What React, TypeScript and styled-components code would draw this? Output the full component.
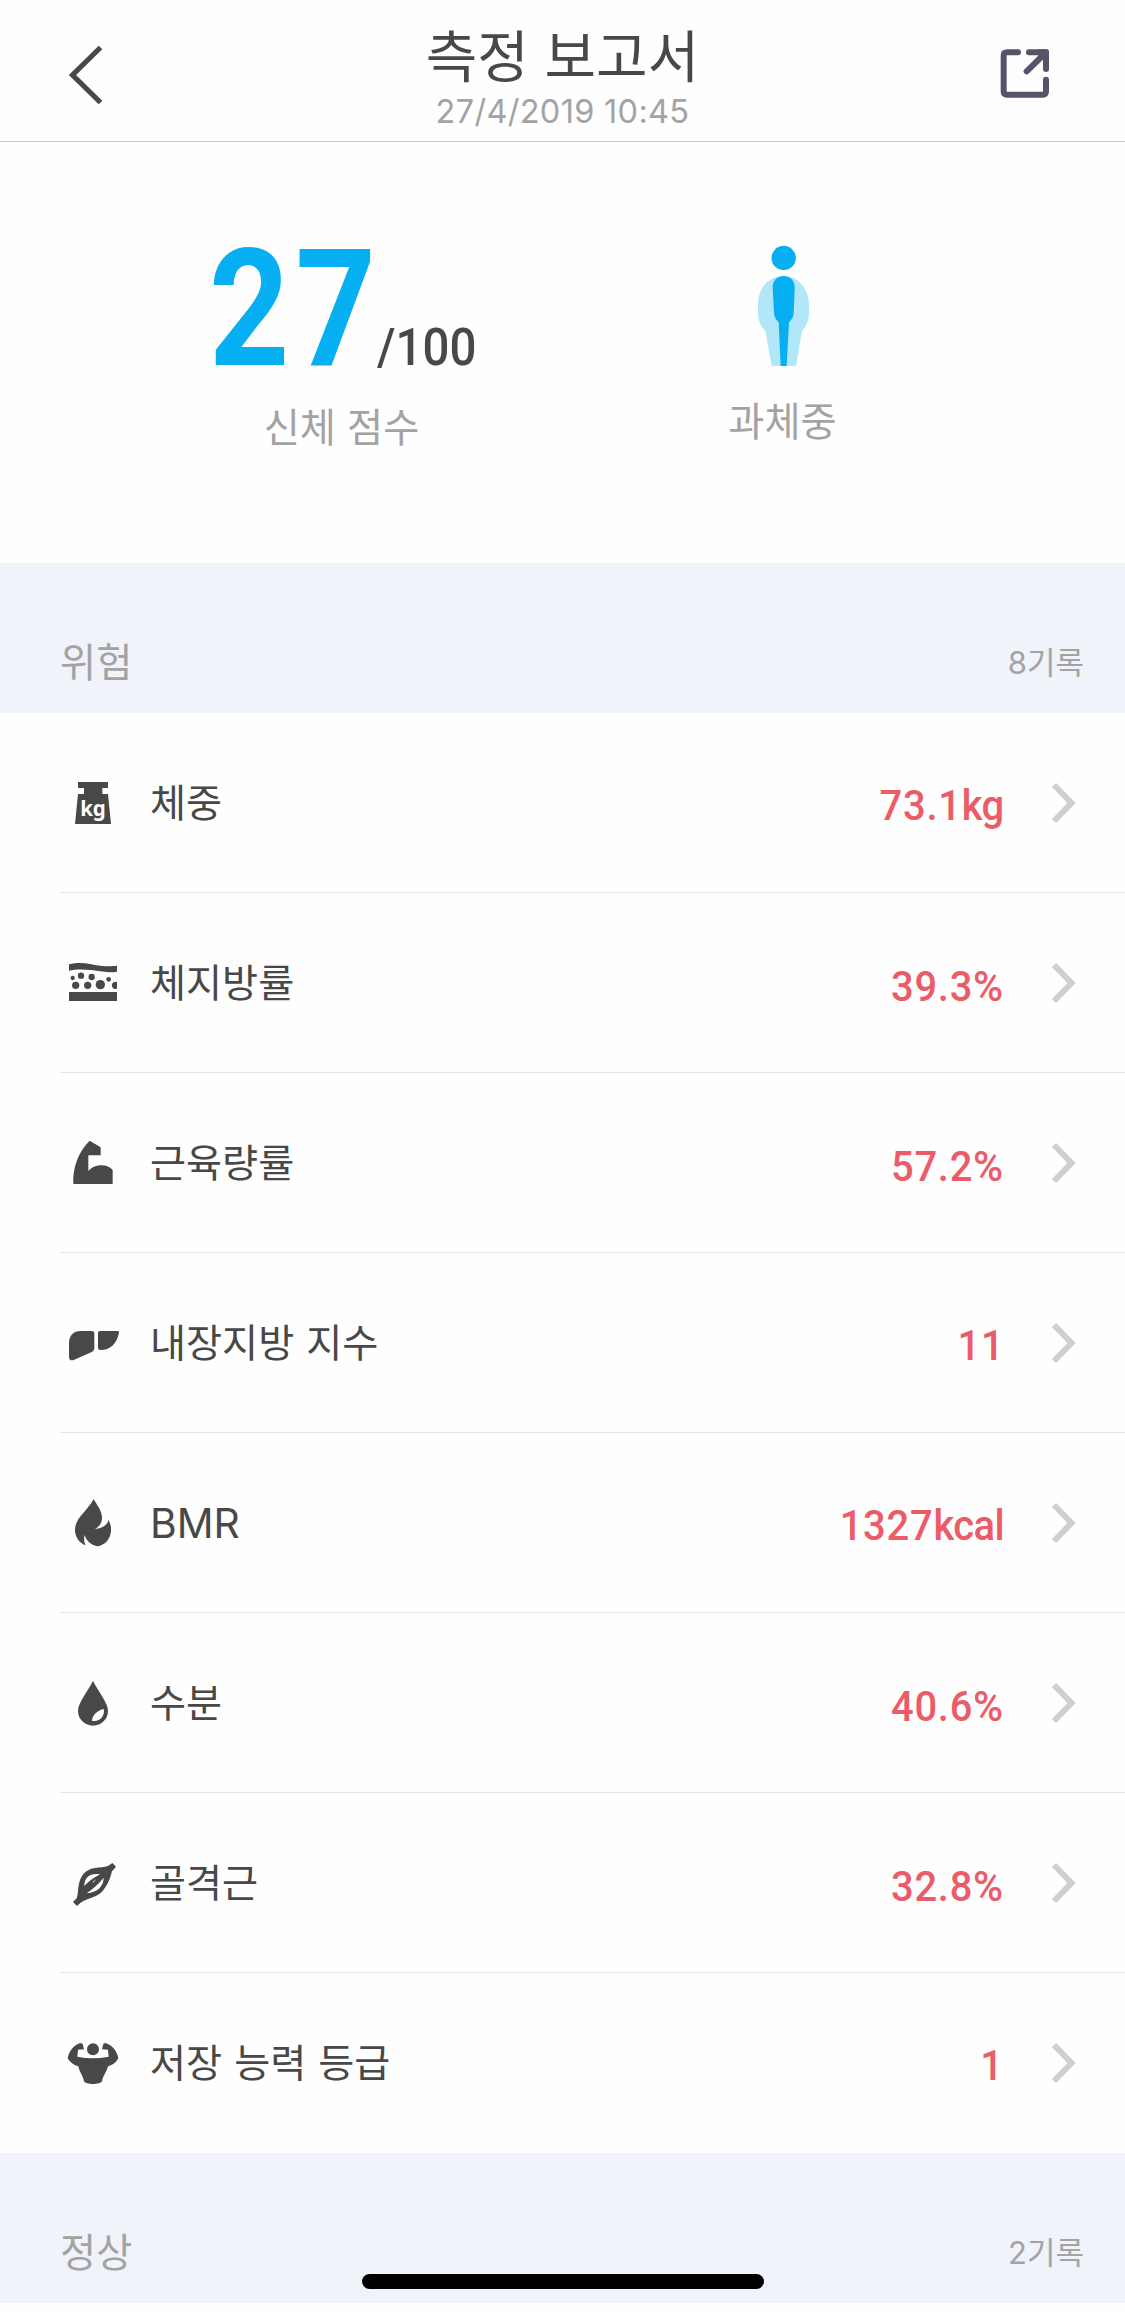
import React from "react";
import styled, { createGlobalStyle } from "styled-components";

const INK = "#484848";
const MUTED = "#a3a3a3";
const BLUE = "#06aff2";
const RED = "#eb5c68";

const GlobalStyle = createGlobalStyle`
  *, *::before, *::after { box-sizing: border-box; }
  body {
    margin: 0;
    background: #fefefe;
    color: ${INK};
    font-family: Inter, "Noto Sans CJK KR", sans-serif;
    -webkit-font-smoothing: antialiased;
  }
`;

const Screen = styled.div`
  position: relative;
  display: flex;
  flex-direction: column;
  width: 1125px;
  height: 2312px;
  overflow: hidden;
  background: #fefefe;
`;

const Header = styled.header`
  display: grid;
  grid-template-columns: 140px 1fr 140px;
  flex: none;
  height: 142px;
  border-bottom: 1px solid #c8c8c8;
`;

const HeaderButton = styled.button<{ $end?: boolean }>`
  display: flex;
  align-items: flex-start;
  justify-content: ${(p) => (p.$end ? "flex-end" : "flex-start")};
  padding: ${(p) => (p.$end ? "35px 60px 0 0" : "35px 0 0 60px")};
  border: 0;
  background: none;
`;

const Heading = styled.div`
  display: flex;
  flex-direction: column;
  align-items: center;
  padding-top: 17px;
`;

const Title = styled.h1`
  margin: 0;
  font-size: 56px;
  font-weight: 400;
  line-height: 80px;
  white-space: nowrap;
`;

const Timestamp = styled.time`
  color: ${MUTED};
  font-size: 32.5px;
  line-height: 30px;
  letter-spacing: 0.3px;
  white-space: nowrap;
`;

const Summary = styled.section`
  display: grid;
  grid-template-columns: 441px 441px;
  flex: none;
  height: 421px;
  padding-left: 121px;
`;

const SummaryItem = styled.div<{ $top: number; $gap: number }>`
  display: flex;
  flex-direction: column;
  align-items: center;
  gap: ${(p) => p.$gap}px;
  padding-top: ${(p) => p.$top}px;
`;

const Score = styled.div`
  display: flex;
  align-items: baseline;
  height: 143px;
  font-family: Roboto, sans-serif;
  line-height: 166px;
  white-space: nowrap;
`;

const ScoreValue = styled.span`
  margin-right: -33px;
  color: ${BLUE};
  font-size: 163px;
  font-weight: 700;
  letter-spacing: 7px;
  transform: scaleX(0.86);
  transform-origin: left center;
`;

const ScoreTotal = styled.span`
  margin-right: -10px;
  font-size: 51px;
  font-weight: 500;
  transform: scaleX(0.93);
  transform-origin: left center;
`;

const SummaryLabel = styled.div`
  color: ${MUTED};
  font-size: 39.3px;
  line-height: 60px;
  white-space: nowrap;
`;

const SectionBar = styled.div`
  display: flex;
  align-items: center;
  justify-content: space-between;
  flex: none;
  height: 150px;
  padding: 43px 41px 0 60px;
  background: #f0f3fa;
  color: ${MUTED};
  white-space: nowrap;
`;

const SectionName = styled.h2`
  margin: 0;
  font-size: 39.3px;
  font-weight: 400;
`;

const SectionCount = styled.span`
  padding-top: 2px;
  font-size: 31px;
`;

const List = styled.ul`
  flex: none;
  margin: 0;
  padding: 0 0 0 60px;
  list-style: none;
`;

const Row = styled.li`
  display: flex;
  align-items: center;
  height: 180px;
  padding: 0 48px 0 6px;
  border-bottom: 1px solid #e4e4e4;

  &:last-child {
    border-bottom-color: transparent;
  }
`;

const RowIcon = styled.svg`
  flex: none;
  width: 54px;
  height: 54px;
  fill: ${INK};
`;

const RowLabel = styled.span<{ $latin: boolean }>`
  flex: 1;
  padding: ${(p) => (p.$latin ? "0 0 0 30px" : "1px 0 0 30px")};
  font-size: ${(p) => (p.$latin ? 40.8 : 39.2)}px;
  line-height: 60px;
  white-space: nowrap;
  word-spacing: 1px;
`;

const RowValue = styled.span`
  margin-right: 45px;
  padding-top: 7px;
  color: ${RED};
  font-family: Roboto, sans-serif;
  font-size: 42px;
  font-weight: 500;
  letter-spacing: 0.8px;
  line-height: 60px;
  white-space: nowrap;
  transform: scaleX(0.95);
  transform-origin: right center;
`;

const Unit = styled.span<{ $symbol: boolean }>`
  font-size: ${(p) => (p.$symbol ? 43 : 42)}px;
  letter-spacing: ${(p) => (p.$symbol ? 0.8 : -0.6)}px;
`;

const HomeIndicator = styled.div`
  position: absolute;
  bottom: 23px;
  left: 362px;
  width: 402px;
  height: 15px;
  border-radius: 8px;
  background: #000;
`;

const WeightIcon = () => (
  <RowIcon viewBox="78 108 162 162">
    <path d="M114 126H204V144H187V162H204L213 252H105L114 162H132V144H114Z" />
    <text x="159" y="228" textAnchor="middle" fill="#fff" fontFamily="'Noto Sans', sans-serif" fontWeight="700" fontSize="66" textLength="77" lengthAdjust="spacingAndGlyphs">
      kg
    </text>
  </RowIcon>
);

const FatIcon = () => (
  <RowIcon viewBox="78 648 162 162">
    <path d="M87 673C125 663 150 673 180 677C205 680 219 678 231 677V695C205 700 190 695 160 691C130 687 105 688 87 692Z" />
    <circle cx="98" cy="714" r="6.5" />
    <circle cx="123" cy="707" r="9.5" />
    <circle cx="155" cy="711" r="9.5" />
    <circle cx="206" cy="718" r="7" />
    <circle cx="107" cy="736" r="11" />
    <circle cx="143" cy="736" r="11" />
    <circle cx="181" cy="734" r="14" />
    <path d="M231 726A11 11 0 1 0 231 746Z" />
    <rect x="87" y="756" width="144" height="27" />
  </RowIcon>
);

const MuscleIcon = () => (
  <RowIcon viewBox="78 108 162 162">
    <path d="M149 122L182 142V166H145V213C157 200 170 196 184 196C199 196 211 202 218 210V252H100C97 204 116 153 149 122Z" />
  </RowIcon>
);

const LiverIcon = () => (
  <RowIcon viewBox="78 648 162 162">
    <path d="M122 693H155Q163 693 163 701V745Q163 751 157 755L101 780Q87 784 87 770V728C87 707 101 693 122 693Z" />
    <path d="M179 693H234Q238 694 237 699C229 733 211 750 181 750Q174 750 174 744V698Q174 693 179 693Z" />
  </RowIcon>
);

const FlameIcon = () => (
  <RowIcon viewBox="78 108 162 162">
    <path d="M161 117C169 133 187 151 186 176C185 190 177 201 165 207C185 205 201 197 206 180C212 193 214 203 213 213C211 239 194 255 173 259C154 255 139 244 134 225C131 236 132 245 137 256C117 248 105 230 105 209C105 174 144 151 161 117Z" />
  </RowIcon>
);

const DropIcon = () => (
  <RowIcon viewBox="78 648 162 162">
    <path fillRule="evenodd" d="M159 662C172 691 204 727 204 752A45 45 0 0 1 114 752C114 727 146 691 159 662ZM191 747C174 750 157 765 156 782C177 787 196 769 191 747Z" />
  </RowIcon>
);

const FibreIcon = () => (
  <RowIcon viewBox="78 108 162 162">
    <path fillRule="evenodd" d="M217 129L228 140L216 154C211 174 203 197 186 215C165 235 145 232 122 248L111 258L99 246L110 235C117 219 110 187 130 162C151 137 180 146 205 137ZM133 198C145 184 160 174 180 163C151 159 133 171 133 198ZM191 173C177 190 160 206 140 220C171 216 190 202 191 173Z" />
    <path d="M158 188L166 180" stroke="#fefefe" strokeWidth="2.5" />
  </RowIcon>
);

const BodybuilderIcon = () => (
  <RowIcon viewBox="78 648 162 162">
    <circle cx="159" cy="688" r="18" />
    <path d="M121 669L128 672L132 688L114 689L112 710Q159 719 206 710L204 689L186 688L190 671L196 669C218 675 231 694 235 715C227 729 216 737 204 739C200 757 189 766 186 784C179 795 139 795 132 784C129 766 118 757 115 739C102 737 91 728 83 715C87 694 100 675 121 669Z" />
  </RowIcon>
);

const Chevron = () => (
  <svg width="28" height="42" viewBox="0 0 28 42" fill="none">
    <path d="M5 3L22.5 21L5 39" stroke="#cfcfcf" strokeWidth="6" />
  </svg>
);

interface Measurement {
  label: string;
  value: string;
  unit?: string;
  Icon: React.FC;
  latin?: boolean;
}

const measurements: Measurement[] = [
  { label: "체중", value: "73.1", unit: "kg", Icon: WeightIcon },
  { label: "체지방률", value: "39.3", unit: "%", Icon: FatIcon },
  { label: "근육량률", value: "57.2", unit: "%", Icon: MuscleIcon },
  { label: "내장지방 지수", value: "11", Icon: LiverIcon },
  { label: "BMR", value: "1327", unit: "kcal", Icon: FlameIcon, latin: true },
  { label: "수분", value: "40.6", unit: "%", Icon: DropIcon },
  { label: "골격근", value: "32.8", unit: "%", Icon: FibreIcon },
  { label: "저장 능력 등급", value: "1", Icon: BodybuilderIcon },
];

export default function App() {
  return (
    <Screen lang="ko">
      <GlobalStyle />
      <Header>
        <HeaderButton>
          <svg width="50" height="80" viewBox="0 0 50 80" fill="none">
            <path d="M40.5 12.5L12.5 40L40.5 67.5" stroke={INK} strokeWidth="5.2" />
          </svg>
        </HeaderButton>
        <Heading>
          <Title>측정 보고서</Title>
          <Timestamp>27/4/2019 10:45</Timestamp>
        </Heading>
        <HeaderButton $end>
          <svg width="80" height="80" viewBox="0 0 240 240" fill="none" stroke="#56546b" strokeWidth="18" strokeLinecap="round" strokeLinejoin="round">
            <path d="M99 52H66Q56 52 56 62V169Q56 179 66 179H173Q183 179 183 169V134" />
            <path d="M132 52H183V102M178 57L125 109" />
            <path d="M163 52H183V72Z" fill="#56546b" />
          </svg>
        </HeaderButton>
      </Header>

      <Summary>
        <SummaryItem $top={85} $gap={28}>
          <Score>
            <ScoreValue>27</ScoreValue>
            <ScoreTotal>/100</ScoreTotal>
          </Score>
          <SummaryLabel>신체 점수</SummaryLabel>
        </SummaryItem>
        <SummaryItem $top={93} $gap={17}>
          <svg width="90" height="140" viewBox="-5 0 270 420">
            <path d="M131 123C176 123 208 160 208 210V232C208 258 199 275 187 288L169 393H96L77 288C64 275 55 258 55 232V210C55 160 86 123 131 123Z" fill="#b0e7f9" />
            <circle cx="132" cy="69" r="36.5" fill={BLUE} />
            <path d="M132 123C152 123 166 138 165 158L162 235C161 248 156 254 148 262L141 393H123L117 262C109 254 104 248 103 235L99 158C98 138 112 123 132 123Z" fill={BLUE} />
          </svg>
          <SummaryLabel>과체중</SummaryLabel>
        </SummaryItem>
      </Summary>

      <SectionBar>
        <SectionName>위험</SectionName>
        <SectionCount>8기록</SectionCount>
      </SectionBar>

      <List>
        {measurements.map(({ label, value, unit, Icon, latin = false }) => (
          <Row key={label}>
            <Icon />
            <RowLabel $latin={latin}>{label}</RowLabel>
            <RowValue>
              {value}
              {unit && <Unit $symbol={unit === "%"}>{unit}</Unit>}
            </RowValue>
            <Chevron />
          </Row>
        ))}
      </List>

      <SectionBar>
        <SectionName>정상</SectionName>
        <SectionCount>2기록</SectionCount>
      </SectionBar>
      <HomeIndicator />
    </Screen>
  );
}
